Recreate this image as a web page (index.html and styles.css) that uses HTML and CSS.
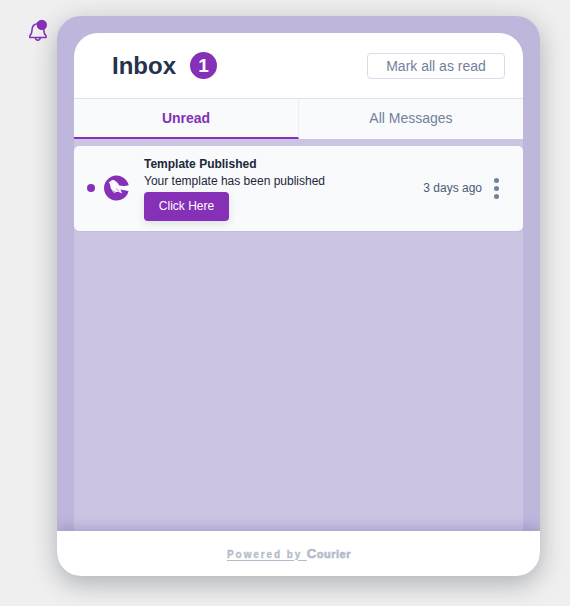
FILE: index.html
```html
<!DOCTYPE html>
<html lang="en">
<head>
<meta charset="utf-8">
<title>Inbox</title>
<link rel="stylesheet" href="styles.css">
</head>
<body>
<button class="bell" aria-label="Notifications">
  <svg width="20" height="23" viewBox="0 0 20 23" fill="none" stroke="#8630b8" stroke-width="1.6" stroke-linejoin="round">
    <path d="M1.800 18.500v-1.600c1.900-1.500 2.100-2.900 2.200-5.600.1-4.300 2.300-6.500 6-6.500s5.700 2.200 5.800 6.500c.1 2.700.3 4.100 2.200 5.600v1.600z"/>
    <path d="M9.700 4.800V3"/>
    <path d="M7.500 18.800c.2 3.200 4.500 3.200 4.700 0"/>
    <circle cx="13.800" cy="5.900" r="5.200" fill="#8630b8" stroke="none"/>
  </svg>
</button>
<main class="panel">
  <section class="inbox">
    <header class="header">
      <h1 class="title">Inbox</h1>
      <span class="count">1</span>
      <button class="mark-read">Mark all as read</button>
    </header>
    <nav class="tabs">
      <button class="tab tab-active">Unread</button>
      <button class="tab">All Messages</button>
    </nav>
    <article class="message">
      <span class="unread-dot"></span>
      <svg class="avatar" width="26" height="26" viewBox="0 0 26 26">
        <path fill="#8630b8" d="M24.700 10.300A12.500 12.500 0 1 0 24.600 16.200L18.700 14.800 17.400 12.700 19.300 11.300z"/>
        <path fill="#f9fafc" d="M4.600 7.200 6.600 6.200C7.400 5 9.200 4.700 10.600 5.500 12.700 6.700 14.400 8.400 15.300 10.500L19.500 11v4.200L16.400 14.600 18.200 18.600 14.200 16.800C11.500 17.500 8.600 16.400 7.200 14.100 6 12.100 6.900 9.300 4.600 7.200z"/>
        <path d="m8.500 16 1.500 1.500 1.500.2" fill="none" stroke="#f9fafc" stroke-width=".7"/>
        <path d="m12.200 13.700 2.800 2.500" fill="none" stroke="#8630b8" stroke-width=".6"/>
      </svg>
      <div class="content">
        <h2 class="message-title">Template Published</h2>
        <p class="message-text">Your template has been published</p>
        <button class="action">Click Here</button>
      </div>
      <time class="time">3 days ago</time>
      <button class="more" aria-label="More options"><i></i><i></i><i></i></button>
    </article>
  </section>
  <footer class="footer">
    <a class="powered">Powered by&nbsp;</a><span class="brand"><span class="brand-c">C</span>ourier</span>
  </footer>
</main>
</body>
</html>
```
FILE: styles.css
```css
* { box-sizing: border-box; }
body {
  margin: 0;
  height: 606px;
  overflow: hidden;
  display: flex;
  align-items: flex-start;
  background: #efefef;
  font-family: "Liberation Sans", Arial, sans-serif;
}
button {
  font: inherit;
  padding: 0;
  border: 0;
  background: none;
}
h1, h2, p { margin: 0; }
.bell {
  width: 20px;
  height: 23px;
  margin: 19px 9px 0 28px;
}
.bell svg { display: block; }
.panel {
  width: 483px;
  height: 560px;
  margin-top: 16px;
  display: flex;
  flex-direction: column;
  overflow: hidden;
  border-radius: 24px;
  background: #bfb6dc;
  box-shadow: 0 8px 24px rgba(28, 39, 58, .28), 0 2px 36px rgba(28, 39, 58, .04);
}
.inbox {
  flex: 1;
  margin: 17px 17px 0;
  border-radius: 24px 24px 0 0;
  overflow: hidden;
  background: #ccc4e3;
}
.header {
  display: flex;
  align-items: center;
  height: 66px;
  padding: 0 18px 0 38px;
  background: #fff;
  border-bottom: 1px solid #dfe2ec;
}
.title {
  width: 64px;
  font-size: 24px;
  line-height: 28px;
  color: #24324b;
}
.count {
  width: 27px;
  height: 27px;
  margin-left: 14px;
  border-radius: 50%;
  background: #8630b8;
  color: #fff;
  font-size: 19px;
  font-weight: bold;
  line-height: 27px;
  text-align: center;
}
.mark-read {
  width: 138px;
  height: 26px;
  margin-left: auto;
  border: 1px solid #dcd9ec;
  border-radius: 4px;
  color: #73819b;
  font-size: 14px;
}
.tabs {
  display: flex;
  height: 40px;
  background: #f9fafc;
}
.tab {
  flex: 1;
  padding-bottom: 2px;
  color: #73819b;
  font-size: 14px;
}
.tab-active {
  padding-bottom: 0;
  border-right: 1px solid #eceef2;
  border-bottom: 2px solid #8630b8;
  color: #8630b8;
  font-weight: bold;
}
.message {
  display: flex;
  align-items: center;
  height: 85px;
  margin-top: 7px;
  padding: 0 24px 1px 13px;
  border-radius: 5px;
  background: #f9fafc;
  box-shadow: 0 1px 1px rgba(100, 90, 150, .08);
}
.unread-dot {
  width: 8px;
  height: 8px;
  border-radius: 50%;
  background: #8630b8;
}
.avatar { margin-left: 9px; }
.content {
  margin-left: 14px;
  align-self: flex-start;
  padding-top: 10px;
}
.message-title, .message-text {
  font-size: 12px;
  line-height: 17px;
  color: #1c273a;
}
.action {
  display: block;
  width: 85px;
  height: 29px;
  margin-top: 2px;
  padding-bottom: 2px;
  border-radius: 4px;
  background: #8630b8;
  box-shadow: 0 3px 8px rgba(28, 39, 58, .12);
  color: #fff;
  font-size: 12px;
}
.time {
  margin-left: auto;
  padding-bottom: 1px;
  color: #4c5a73;
  font-size: 12px;
}
.more {
  display: flex;
  flex-direction: column;
  gap: 3px;
  margin-left: 12px;
}
.more i {
  width: 5px;
  height: 5px;
  border-radius: 50%;
  background: #73819b;
}
.footer {
  z-index: 1;
  display: flex;
  align-items: center;
  justify-content: center;
  height: 45px;
  padding: 1px 19px 0 0;
  background: #fff;
  box-shadow: 0 -3px 12px rgba(70, 62, 130, .28);
  color: #b3bccb;
  font-weight: bold;
}
.powered {
  font-size: 10px;
  letter-spacing: 1.9px;
  text-decoration: underline;
  text-underline-offset: 2px;
  -webkit-text-stroke: .3px #b3bccb;
}
.brand {
  font-size: 11px;
  line-height: 14px;
  letter-spacing: .5px;
  -webkit-text-stroke: .6px #b3bccb;
}
.brand-c { font-size: 13px; }
```
